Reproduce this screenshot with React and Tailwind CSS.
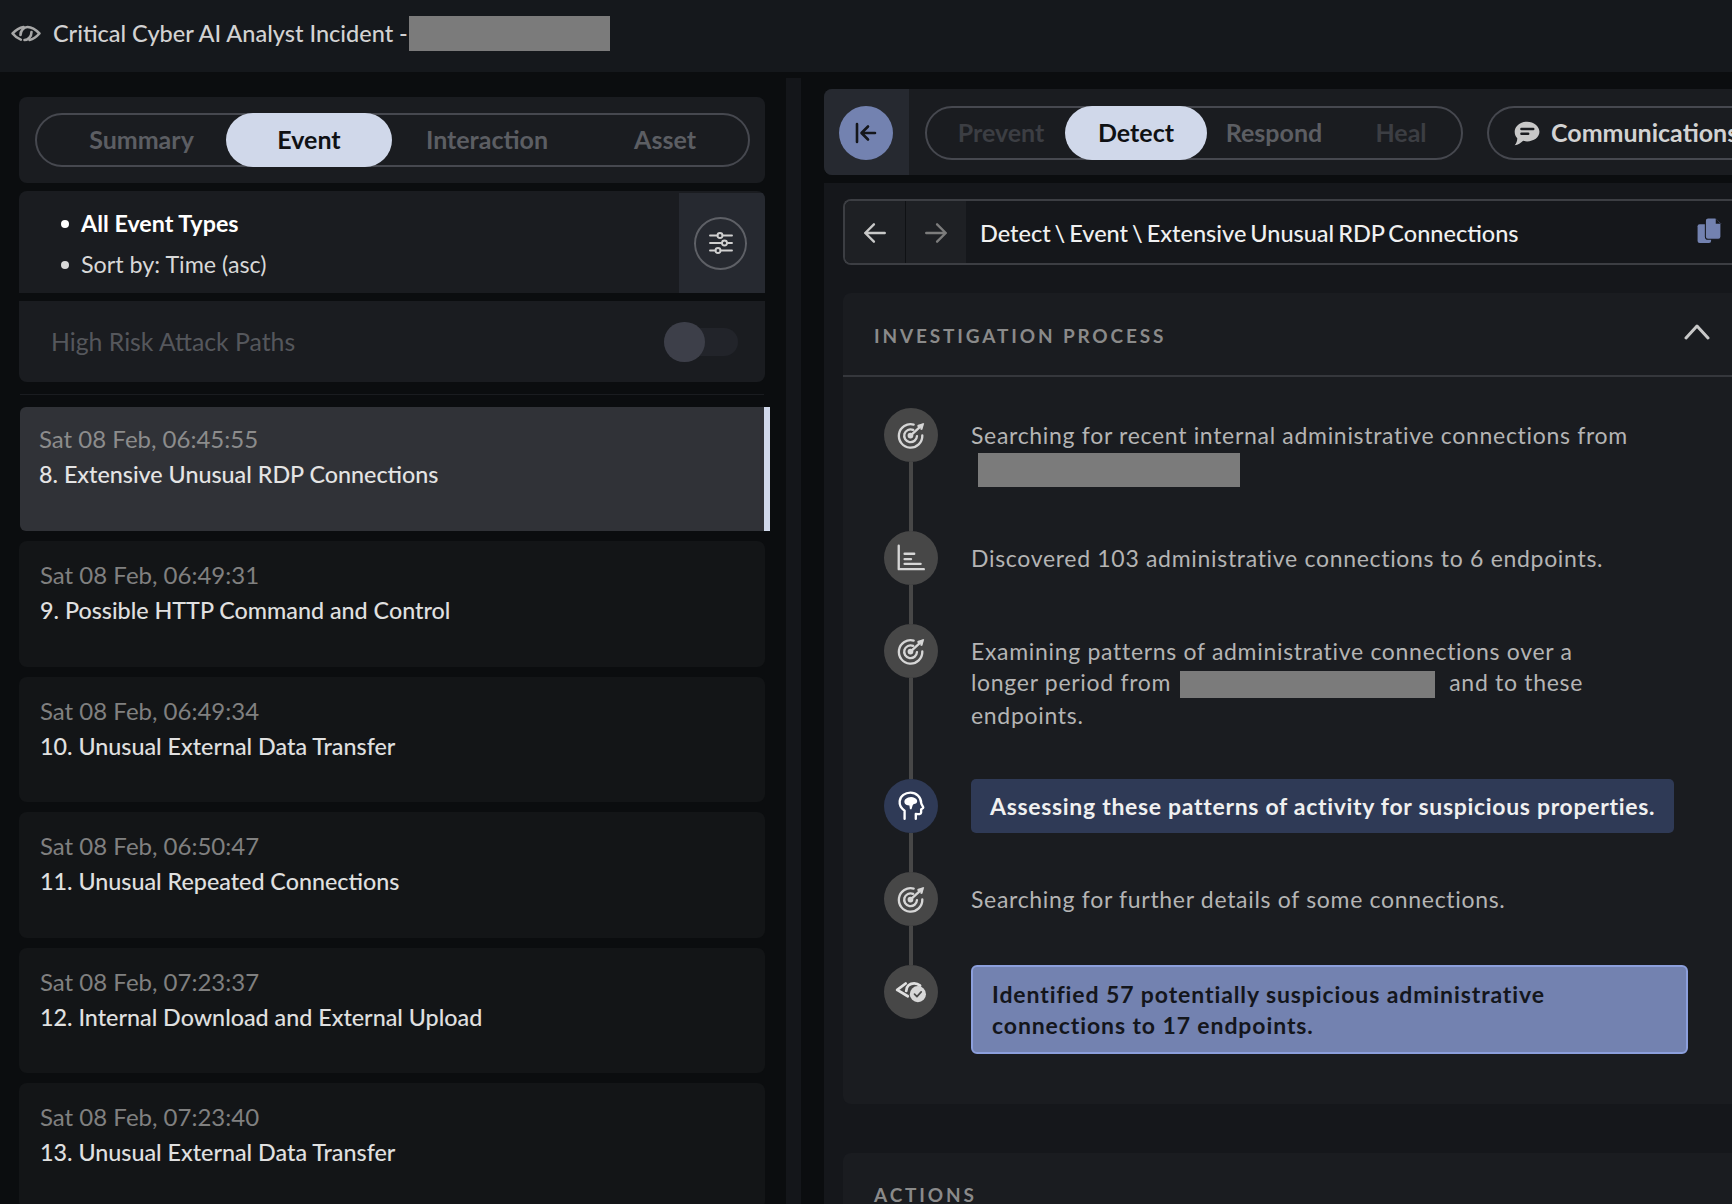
import React from "react";

const Target = () => (
  <svg viewBox="0 0 30 30" className="w-[32px] h-[32px]" fill="none" stroke="#d6d6d6" strokeWidth="2.2" strokeLinecap="round">
    <path d="M17.5 5.2A11 11 0 1 0 25.6 15.5" />
    <path d="M17 10.2A6 6 0 1 0 20.6 16" />
    <circle cx="14.5" cy="15.5" r="1.6" />
    <path d="M14.5 15.5L25.5 5.5" />
    <path d="M22 6.5l3.8-1.2-1 3.8" />
  </svg>
);
const Chart = () => (
  <svg viewBox="0 0 30 30" className="w-[32px] h-[32px]" fill="none" stroke="#d6d6d6" strokeWidth="2.2" strokeLinecap="round" strokeLinejoin="round">
    <path d="M3.5 3.5V25.5H27" />
    <path d="M9 11H18M9 16H15M9 20.5H24" />
  </svg>
);
const Head = () => (
  <svg viewBox="0 0 30 30" className="w-[32px] h-[32px]" fill="none" stroke="#ffffff" strokeWidth="2.2" strokeLinecap="round" strokeLinejoin="round">
    <path d="M9 27V19.5C5.5 17 4 14 4.4 10.5C5 5.5 9.5 2.5 14.5 2.5C20 2.5 24.5 6.5 24.5 12C24.5 13.5 26.5 15.5 26.5 16.5C26.5 17.5 24.8 17.6 24.5 18.2V21C24.5 22.8 22 22.8 19.5 22.5V27" />
    <path fill="#ffffff" stroke="none" d="M10 8.5C12 6.5 16 6 18.5 7.5C21 8.5 21.5 11 20 12.5C18.5 13.5 17 13 16.5 14.5L15.5 18H14L13.5 14.5C11.5 14.5 9 13.5 8.8 11.5C8.7 10.2 9.2 9.2 10 8.5Z" />
  </svg>
);
const EyeCheck = () => (
  <svg viewBox="0 0 32 30" className="w-[34px] h-[32px]" fill="none">
    <path d="M3 13L11 7M3 13L13 19" stroke="#e0e0e0" strokeWidth="2.6" strokeLinecap="round" />
    <path d="M11.5 14C11.5 9.5 15 6.8 19 6.8C21 6.8 23 7.6 24.5 9" stroke="#e0e0e0" strokeWidth="2.6" strokeLinecap="round" />
    <circle cx="22.5" cy="17" r="7.6" fill="#d8d8d8" />
    <path d="M19.3 17L21.6 19.3L25.6 14.9" stroke="#4a4a4a" strokeWidth="1.6" strokeLinecap="round" strokeLinejoin="round" />
  </svg>
);
const HeaderEye = () => (
  <svg viewBox="0 0 30 17" className="w-[30px] h-[17px]" fill="none" stroke="#a8a8a8" strokeWidth="2.6" strokeLinecap="round" strokeLinejoin="round">
    <path d="M12.5 2C8.5 2.6 4.8 5 1.6 8.5C4 11.5 6.8 13.5 9.8 14.6" />
    <path d="M9.5 10C9.5 5.5 12.8 2 16.5 2C21 2 25 4.8 28.4 8.5C25.5 11.8 22.5 14 18.5 15" />
    <path d="M20.5 7C20.5 11.5 17.2 15 13.5 15" />
  </svg>
);
const Sliders = () => (
  <svg viewBox="0 0 24 24" className="w-[24px] h-[24px]" fill="none" stroke="#d0d0d0" strokeWidth="1.9" strokeLinecap="round">
    <path d="M1 4.5H8.5M13.5 4.5H23M1 12H13M18 12H23M1 19.5H6.5M11.5 19.5H23" />
    <circle cx="11" cy="4.5" r="2.5" />
    <circle cx="15.5" cy="12" r="2.5" />
    <circle cx="9" cy="19.5" r="2.5" />
  </svg>
);
const Chat = () => (
  <svg viewBox="0 0 24 24" className="w-[27px] h-[27px]">
    <path fill="#c8c8c8" d="M12.5 1.5C18.5 1.5 23.5 5.5 23.5 10.5C23.5 15.5 18.5 19 12.5 19C11.2 19 10 18.8 9 18.5C7 20.5 4.5 22 1.5 22.5C3 20.5 3.8 18.5 3.8 16.2C2.2 14.6 1.5 12.7 1.5 10.5C1.5 5.5 6.5 1.5 12.5 1.5Z" />
    <path d="M7.5 8H18M7.5 12.2H13.5" stroke="#1a1c20" strokeWidth="2.2" strokeLinecap="round" />
  </svg>
);
const Copy = () => (
  <svg viewBox="0 0 24 26" className="w-[26px] h-[27px]">
    <rect x="1" y="7" width="13" height="18" rx="2" fill="#7382b0" />
    <path fill="#7382b0" stroke="#14161a" strokeWidth="1" d="M11 1H18.5L23.5 6V19C23.5 20.5 22.5 21.5 21 21.5H11C9.5 21.5 8.5 20.5 8.5 19V3.5C8.5 2 9.5 1 11 1Z" />
    <path fill="#14161a" d="M18.5 1.5V6.5H23Z" />
  </svg>
);

const Redact = ({ className }) => <span className={`inline-block bg-[#7b7b7b] align-middle ${className}`} />;

const events = [
  ["Sat 08 Feb, 06:49:31", "9. Possible HTTP Command and Control"],
  ["Sat 08 Feb, 06:49:34", "10. Unusual External Data Transfer"],
  ["Sat 08 Feb, 06:50:47", "11. Unusual Repeated Connections"],
  ["Sat 08 Feb, 07:23:37", "12. Internal Download and External Upload"],
  ["Sat 08 Feb, 07:23:40", "13. Unusual External Data Transfer"],
];

function Step({ icon, last, active, h, children }) {
  return (
    <div className={`flex gap-[33px] ${h}`}>
      <div className="flex flex-col items-center w-[54px] shrink-0">
        <div className={`w-[54px] h-[54px] rounded-full flex items-center justify-center shrink-0 ${active ? "bg-[#2f3a56]" : "bg-[#474747]"}`}>{icon}</div>
        {!last && <div className="w-[4px] flex-1 bg-[#474747]" />}
      </div>
      <div className="flex-1 min-w-0">{children}</div>
    </div>
  );
}

export default function App() {
  return (
    <div className="w-[1732px] h-[1204px] overflow-hidden flex flex-col bg-[#0b0d0f] font-['Lato','Liberation_Sans',sans-serif]">
      <header className="h-[72px] shrink-0 bg-[#15181c] flex items-center pl-[11px] pb-[6px]">
        <HeaderEye />
        <span className="ml-[12px] mt-[2px] text-[23.5px] text-[#d2d2d2] font-medium">Critical Cyber AI Analyst Incident -</span>
        <span className="ml-[1px] w-[201px] h-[35px] bg-[#7b7b7b]" />
      </header>
      <div className="flex flex-1 min-h-0">
        <aside className="w-[786px] shrink-0 pl-[19px] pt-[25px] flex flex-col">
          <div className="w-[746px] h-[86px] shrink-0 bg-[#1a1c20] rounded-[8px] flex items-center pl-[16px]">
            <div className="w-[715px] h-[54px] rounded-full border-2 border-[#46484f] flex items-center text-[25px] font-bold text-[#5c5e63]">
              <div className="w-[189px] pl-[20px] text-center">Summary</div>
              <div className="w-[166px] h-[54px] rounded-full bg-[#d0d8ea] text-[#0f1114] flex items-center justify-center">Event</div>
              <div className="w-[190px] text-center">Interaction</div>
              <div className="w-[166px] text-center">Asset</div>
            </div>
          </div>
          <div className="mt-[8px] w-[746px] h-[102px] shrink-0 bg-[#1a1c20] rounded-t-[8px] flex overflow-hidden">
            <div className="flex-1 pl-[42px] pt-[12px] text-[23.3px] leading-[41px]">
              <div className="flex items-center text-white font-bold"><span className="w-[8px] h-[8px] rounded-full bg-white mr-[12px]" />All Event Types</div>
              <div className="flex items-center text-[#d8d8d8]"><span className="w-[8px] h-[8px] rounded-full bg-[#d8d8d8] mr-[12px]" />Sort by: Time (asc)</div>
            </div>
            <div className="w-[86px] bg-[#262930] mt-[2px] flex items-center pl-[15px]">
              <div className="w-[53px] h-[53px] rounded-full border-2 border-[#5e6066] flex items-center justify-center"><Sliders /></div>
            </div>
          </div>
          <div className="mt-[8px] w-[746px] h-[81px] shrink-0 bg-[#1a1c20] rounded-b-[8px] flex items-center pl-[32px] pr-[27px] justify-between">
            <span className="text-[24.8px] text-[#55575c]">High Risk Attack Paths</span>
            <div className="w-[74px] h-[28px] rounded-full bg-[#22242a] flex items-center">
              <div className="w-[41px] h-[40px] rounded-full bg-[#3d3f49] shrink-0" />
            </div>
          </div>
          <div className="mt-[12px] w-[744px] h-[1px] shrink-0 ml-[1px] bg-[#1a1c20]" />
          <div className="mt-[12px] w-[750px] h-[124px] shrink-0 ml-[1px] bg-[#303237] rounded-l-[6px] border-r-[6px] border-[#d0d8ea] pl-[19px] pt-[17px] overflow-hidden">
            <div className="text-[24px] leading-[30px] text-[#8c8c8c]">Sat 08 Feb, 06:45:55</div>
            <div className="mt-[5px] text-[23.3px] leading-[30px] text-[#e4e4e4] font-medium">8. Extensive Unusual RDP Connections</div>
          </div>
          <div className="mt-[10px] shrink-0 flex flex-col gap-[10px]">
            {events.map(([d, t]) => (
              <div key={t} className="w-[746px] h-[125.6px] shrink-0 bg-[#131517] rounded-[8px] pl-[21px] pt-[19px]">
                <div className="text-[24px] leading-[30px] text-[#808080]">{d}</div>
                <div className="mt-[5px] text-[23.3px] leading-[30px] text-[#e0e0e0] font-medium">{t}</div>
              </div>
            ))}
          </div>
        </aside>
        <div className="w-[15px] mt-[6px] bg-[#14161a] shrink-0" />
        <main className="ml-[23px] flex-1 min-w-0 pt-[17px] flex flex-col">
          <div className="h-[86px] shrink-0 bg-[#1a1c20] rounded-tl-[8px] rounded-bl-[8px] flex items-center overflow-hidden">
            <div className="w-[85px] h-full bg-[#262930] flex items-center pl-[15px] shrink-0">
              <div className="w-[54px] h-[54px] mt-[2px] rounded-full bg-[#7382b0] flex items-center justify-center">
                <svg viewBox="0 0 24 24" className="w-[24px] h-[24px]" fill="none" stroke="#14161a" strokeWidth="2.6" strokeLinecap="round" strokeLinejoin="round"><path d="M3 3V21M21 12H8M14 5.5L7.5 12L14 18.5" /></svg>
              </div>
            </div>
            <div className="ml-[16px] mt-[2px] w-[538px] h-[54px] shrink-0 rounded-full border-2 border-[#46484f] flex items-center text-[25px] font-bold text-[#3c3e43]">
              <div className="w-[138px] pl-[10px] text-center">Prevent</div>
              <div className="w-[142px] h-[54px] rounded-full bg-[#d0d8ea] text-[#0f1114] flex items-center justify-center">Detect</div>
              <div className="w-[134px] text-center text-[#5c5e63]">Respond</div>
              <div className="w-[120px] text-center">Heal</div>
            </div>
            <div className="ml-[24px] mt-[2px] w-[300px] h-[54px] shrink-0 rounded-l-full border-2 border-r-0 border-[#46484f] flex items-center pl-[24px] gap-[11px] text-[25px] font-bold text-[#d2d2d2]">
              <Chat />
              <span>Communications</span>
            </div>
          </div>
          <div className="mt-[8px] flex-1 bg-[#15171b] pl-[19px] pt-[16px]">
            <div className="h-[66px] border-2 border-r-0 border-[#3c3e43] rounded-l-[8px] flex items-center overflow-hidden">
              <div className="w-[61px] h-full bg-[#1e2024] border-r border-[#0f1114] flex items-center justify-center shrink-0 pt-[2px]">
                <svg viewBox="0 0 24 24" className="w-[26px] h-[26px]" fill="none" stroke="#c8c8c8" strokeWidth="2.2" strokeLinecap="round" strokeLinejoin="round"><path d="M21 12H3M11 4L3 12L11 20" /></svg>
              </div>
              <div className="w-[60px] h-full bg-[#1e2024] flex items-center justify-center shrink-0 pt-[2px]">
                <svg viewBox="0 0 24 24" className="w-[26px] h-[26px]" fill="none" stroke="#7c7c7c" strokeWidth="2.2" strokeLinecap="round" strokeLinejoin="round"><path d="M3 12H21M13 4L21 12L13 20" /></svg>
              </div>
              <span className="ml-[14px] mt-[3px] text-[23.5px] text-[#f0f0f0] font-medium [word-spacing:-2px]">Detect \ Event \ Extensive Unusual RDP Connections</span>
              <div className="ml-auto mr-[10px] mb-[4px]"><Copy /></div>
            </div>
            <section className="mt-[28px] h-[811px] bg-[#1a1c20] rounded-l-[8px] flex flex-col">
              <div className="h-[84px] shrink-0 border-b-2 border-[#35373c] flex items-center justify-between pl-[31px] pr-[22px] pt-[4px]">
                <span className="text-[19px] font-bold tracking-[0.15em] text-[#8a8a8a]">INVESTIGATION PROCESS</span>
                <svg viewBox="0 0 26 16" className="w-[26px] h-[16px] mb-[8px]" fill="none" stroke="#c8c8c8" strokeWidth="3" strokeLinecap="round" strokeLinejoin="round"><path d="M2 14L13 2L24 14" /></svg>
              </div>
              <div className="pl-[41px] pt-[31px] text-[23px] leading-[31px] tracking-[0.03em] text-[#b4b4b4]">
                <Step icon={<Target />} h="h-[123px]">
                  <div className="pt-[12px]">Searching for recent internal administrative connections from</div>
                  <Redact className="ml-[7px] mt-[1px] w-[262px] h-[34px] block" />
                </Step>
                <Step icon={<Chart />} h="h-[93px]">
                  <div className="pt-[12px]">Discovered 103 administrative connections to 6 endpoints.</div>
                </Step>
                <Step icon={<Target />} h="h-[155px]">
                  <div className="pt-[12px]">
                    Examining patterns of administrative connections over a<br />
                    longer period from <Redact className="ml-[2px] mr-[8px] mb-[2px] w-[255px] h-[27px]" /> and to these<br />
                    endpoints.
                  </div>
                </Step>
                <Step icon={<Head />} active h="h-[93px]">
                  <div className="w-[703px] h-[54px] rounded-[5px] bg-[#2f3a56] flex items-center pl-[19px] text-[#f0f0f0] font-bold">Assessing these patterns of activity for suspicious properties.</div>
                </Step>
                <Step icon={<Target />} h="h-[93px]">
                  <div className="pt-[12px]">Searching for further details of some connections.</div>
                </Step>
                <Step icon={<EyeCheck />} last h="h-[89px]">
                  <div className="w-[717px] h-[89px] rounded-[6px] bg-[#7382b0] border-2 border-[#8c9fdc] pl-[19px] pt-[12px] text-[#14161c] font-bold tracking-[0.039em]">
                    Identified 57 potentially suspicious administrative<br />connections to 17 endpoints.
                  </div>
                </Step>
              </div>
            </section>
            <section className="mt-[49px] h-[60px] bg-[#1a1c20] rounded-l-[8px] pl-[31px] pt-[31px] overflow-hidden">
              <span className="text-[19px] font-bold tracking-[0.15em] text-[#8a8a8a] leading-[22px] block">ACTIONS</span>
            </section>
          </div>
        </main>
      </div>
    </div>
  );
}
